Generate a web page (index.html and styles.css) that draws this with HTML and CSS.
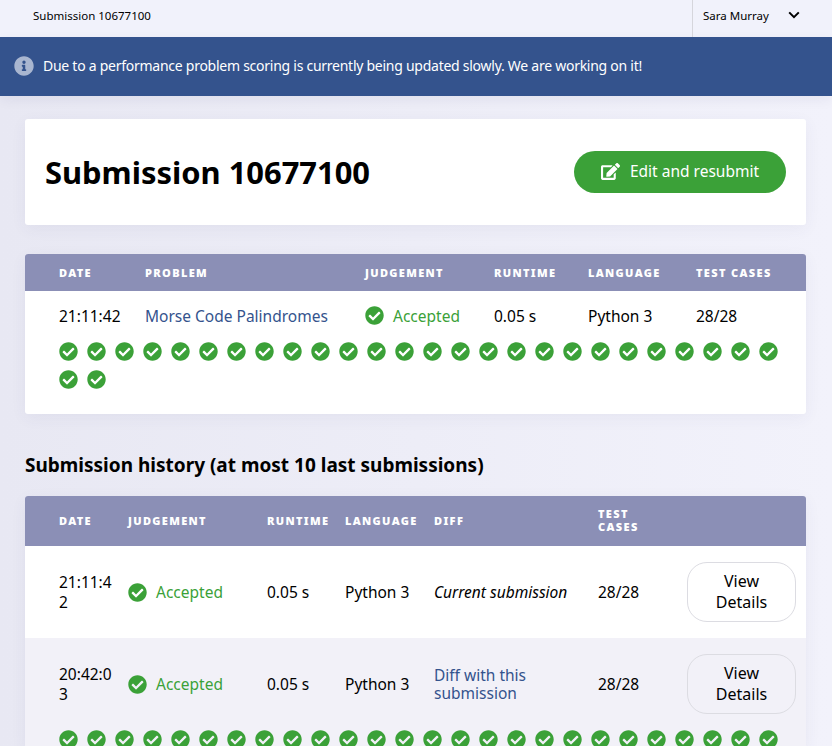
FILE: index.html
```html
<!DOCTYPE html>
<html lang="en">
  <head>
    <meta charset="UTF-8" />
    <title>Submission 10677100</title>
    <link rel="stylesheet" href="styles.css">
  </head>
  <body>
    <svg class="defs" width="0" height="0">
      <symbol id="ok" viewBox="0 0 512 512"><path d="M504 256c0 136.967-111.033 248-248 248S8 392.967 8 256 119.033 8 256 8s248 111.033 248 248zM227.314 387.314l184-184c6.248-6.248 6.248-16.379 0-22.627l-22.627-22.627c-6.248-6.249-16.379-6.249-22.628 0L216 308.118l-70.059-70.059c-6.248-6.248-16.379-6.248-22.628 0l-22.627 22.627c-6.248 6.248-6.248 16.379 0 22.627l104 104c6.249 6.249 16.379 6.249 22.628.001z"/></symbol>
    </svg>

    <header class="topbar">
      <span class="crumb">Submission 10677100</span>
      <div class="user">
        <span>Sara Murray</span>
        <svg class="chevron" viewBox="0 0 12 8"><path d="M1.2 1.4 6 6.2l4.800-4.800" /></svg>
      </div>
    </header>

    <div class="banner">
      <svg class="info" viewBox="0 0 512 512"><path d="M256 8C119.043 8 8 119.083 8 256c0 136.997 111.043 248 248 248s248-111.003 248-248C504 119.083 392.957 8 256 8zm0 110c23.196 0 42 18.804 42 42s-18.804 42-42 42-42-18.804-42-42 18.804-42 42-42zm56 254c0 6.627-5.373 12-12 12h-88c-6.627 0-12-5.373-12-12v-24c0-6.627 5.373-12 12-12h12v-64h-12c-6.627 0-12-5.373-12-12v-24c0-6.627 5.373-12 12-12h64c6.627 0 12 5.373 12 12v100h12c6.627 0 12 5.373 12 12v24z"/></svg>
      <span>Due to a performance problem scoring is currently being updated slowly. We are working on it!</span>
    </div>

    <main class="content">
      <section class="card title-card">
        <h1>Submission 10677100</h1>
        <a class="resubmit" href="#">
          <svg class="edit" viewBox="0 0 576 512"><path d="M402.6 83.2l90.2 90.2c3.8 3.8 3.8 10 0 13.8L274.4 405.6l-92.8 10.3c-12.4 1.4-22.9-9.1-21.5-21.5l10.3-92.8L388.8 83.2c3.8-3.8 10-3.8 13.8 0zm162-22.9l-48.8-48.8c-15.2-15.2-39.9-15.2-55.2 0l-35.4 35.4c-3.8 3.8-3.8 10 0 13.800l90.2 90.2c3.8 3.8 10 3.8 13.8 0l35.4-35.4c15.2-15.3 15.2-40 0-55.2zM384 346.2V448H64V128h229.8c3.2 0 6.2-1.3 8.5-3.5l40-40c7.6-7.6 2.2-20.5-8.5-20.5H48C21.5 64 0 85.5 0 112v352c0 26.5 21.500 48 48 48h352c26.5 0 48-21.5 48-48V306.2c0-10.7-12.9-16-20.5-8.5l-40 40c-2.2 2.3-3.5 5.3-3.5 8.500z"/></svg>
          Edit and resubmit
        </a>
      </section>

      <section class="card">
        <table class="current">
          <thead>
            <tr>
              <th class="c-date">Date</th>
              <th class="c-problem">Problem</th>
              <th class="c-judge">Judgement</th>
              <th class="c-runtime">Runtime</th>
              <th class="c-lang">Language</th>
              <th>Test cases</th>
            </tr>
          </thead>
          <tbody>
            <tr class="main-row">
              <td>21:11:42</td>
              <td><a href="#">Morse Code Palindromes</a></td>
              <td><span class="accepted"><svg class="ok"><use href="#ok" /></svg>Accepted</span></td>
              <td>0.05 s</td>
              <td>Python 3</td>
              <td>28/28</td>
            </tr>
            <tr>
              <td colspan="6" class="tests">
                <div class="test-list">
                  <svg class="ok"><use href="#ok" /></svg><svg class="ok"><use href="#ok" /></svg><svg class="ok"><use href="#ok" /></svg><svg class="ok"><use href="#ok" /></svg>
                  <svg class="ok"><use href="#ok" /></svg><svg class="ok"><use href="#ok" /></svg><svg class="ok"><use href="#ok" /></svg><svg class="ok"><use href="#ok" /></svg>
                  <svg class="ok"><use href="#ok" /></svg><svg class="ok"><use href="#ok" /></svg><svg class="ok"><use href="#ok" /></svg><svg class="ok"><use href="#ok" /></svg>
                  <svg class="ok"><use href="#ok" /></svg><svg class="ok"><use href="#ok" /></svg><svg class="ok"><use href="#ok" /></svg><svg class="ok"><use href="#ok" /></svg>
                  <svg class="ok"><use href="#ok" /></svg><svg class="ok"><use href="#ok" /></svg><svg class="ok"><use href="#ok" /></svg><svg class="ok"><use href="#ok" /></svg>
                  <svg class="ok"><use href="#ok" /></svg><svg class="ok"><use href="#ok" /></svg><svg class="ok"><use href="#ok" /></svg><svg class="ok"><use href="#ok" /></svg>
                  <svg class="ok"><use href="#ok" /></svg><svg class="ok"><use href="#ok" /></svg><svg class="ok"><use href="#ok" /></svg><svg class="ok"><use href="#ok" /></svg>
                </div>
              </td>
            </tr>
          </tbody>
        </table>
      </section>

      <h2>Submission history (at most 10 last submissions)</h2>

      <section class="card">
        <table class="history">
          <thead>
            <tr>
              <th class="h-date">Date</th>
              <th class="h-judge">Judgement</th>
              <th class="h-runtime">Runtime</th>
              <th class="h-lang">Language</th>
              <th class="h-diff">Diff</th>
              <th class="h-tests">Test cases</th>
              <th></th>
            </tr>
          </thead>
          <tbody>
            <tr class="hist-row">
              <td class="hist-date">21:11:42</td>
              <td><span class="accepted"><svg class="ok"><use href="#ok" /></svg>Accepted</span></td>
              <td>0.05 s</td>
              <td>Python 3</td>
              <td><em>Current submission</em></td>
              <td>28/28</td>
              <td><a class="details" href="#">View Details</a></td>
            </tr>
            <tr class="hist-row alt">
              <td class="hist-date">20:42:03</td>
              <td><span class="accepted"><svg class="ok"><use href="#ok" /></svg>Accepted</span></td>
              <td>0.05 s</td>
              <td>Python 3</td>
              <td><a href="#">Diff with this submission</a></td>
              <td>28/28</td>
              <td><a class="details" href="#">View Details</a></td>
            </tr>
            <tr class="alt">
              <td colspan="7" class="tests">
                <div class="test-list">
                  <svg class="ok"><use href="#ok" /></svg><svg class="ok"><use href="#ok" /></svg><svg class="ok"><use href="#ok" /></svg><svg class="ok"><use href="#ok" /></svg>
                  <svg class="ok"><use href="#ok" /></svg><svg class="ok"><use href="#ok" /></svg><svg class="ok"><use href="#ok" /></svg><svg class="ok"><use href="#ok" /></svg>
                  <svg class="ok"><use href="#ok" /></svg><svg class="ok"><use href="#ok" /></svg><svg class="ok"><use href="#ok" /></svg><svg class="ok"><use href="#ok" /></svg>
                  <svg class="ok"><use href="#ok" /></svg><svg class="ok"><use href="#ok" /></svg><svg class="ok"><use href="#ok" /></svg><svg class="ok"><use href="#ok" /></svg>
                  <svg class="ok"><use href="#ok" /></svg><svg class="ok"><use href="#ok" /></svg><svg class="ok"><use href="#ok" /></svg><svg class="ok"><use href="#ok" /></svg>
                  <svg class="ok"><use href="#ok" /></svg><svg class="ok"><use href="#ok" /></svg><svg class="ok"><use href="#ok" /></svg><svg class="ok"><use href="#ok" /></svg>
                  <svg class="ok"><use href="#ok" /></svg><svg class="ok"><use href="#ok" /></svg>
                </div>
              </td>
            </tr>
          </tbody>
        </table>
      </section>
    </main>
  </body>
</html>
```

FILE: styles.css
```css
html,
body {
  height: 746px;
  overflow: hidden;
}

body {
  margin: 0;
  font-family: "Noto Sans", sans-serif;
  color: #000;
  background: linear-gradient(90deg, #e8e8f3 0%, #f2f2fb 100%);
}

a {
  color: #34538d;
  text-decoration: none;
}

.defs {
  display: block;
  height: 0;
}

.topbar {
  display: flex;
  justify-content: space-between;
  height: 37px;
  padding-left: 33px;
  background-color: #f1f2fb;
  font-size: 11.5px;
  line-height: 32px;
}

.user {
  display: flex;
  justify-content: space-between;
  width: 140px;
  padding-left: 10px;
  padding-right: 32px;
  box-sizing: border-box;
  border-left: 1px solid #d6d6dc;
}

.chevron {
  width: 12px;
  height: 8px;
  margin-top: 11px;
  fill: none;
  stroke: #000;
  stroke-width: 2;
}

.banner {
  display: flex;
  align-items: center;
  gap: 9px;
  height: 59px;
  padding: 0 0 2px 14px;
  box-sizing: border-box;
  background-color: #34538d;
  color: #fff;
  font-size: 14px;
  letter-spacing: -0.26px;
  box-shadow: 0 4px 12px rgba(40, 40, 90, 0.06);
}

.info {
  width: 20px;
  height: 20px;
  fill: #a9b6d0;
}

.content {
  padding: 23px 26px 0 25px;
}

.card {
  margin-bottom: 29px;
  background-color: #fff;
  border-radius: 3px;
  box-shadow: 0 4px 16px rgba(60, 60, 120, 0.06);
  overflow: hidden;
}

.title-card {
  display: flex;
  align-items: center;
  justify-content: space-between;
  height: 106px;
  padding: 0 20px;
  box-sizing: border-box;
}

h1 {
  margin: 0;
  font-size: 30.9px;
  font-weight: 700;
}

.resubmit {
  display: flex;
  align-items: center;
  justify-content: center;
  gap: 10px;
  width: 212px;
  height: 42px;
  padding-bottom: 2px;
  box-sizing: border-box;
  border-radius: 21px;
  background-color: #3ba138;
  color: #fff;
  font-size: 15.5px;
}

.edit {
  width: 19px;
  height: 17px;
  fill: #fff;
}

table {
  width: 100%;
  border-collapse: collapse;
  table-layout: fixed;
  font-size: 15.5px;
}

th,
td {
  padding: 0 8px 0 0;
  box-sizing: border-box;
}

th {
  background-color: #8b8fb6;
  color: #fff;
  font-size: 11px;
  font-weight: 900;
  letter-spacing: 1.35px;
  line-height: 13px;
  text-align: left;
  text-transform: uppercase;
}

th:first-child,
td:first-child {
  padding-left: 34px;
}

.current thead tr {
  height: 37px;
}

.c-date {
  width: 120px;
}

.c-problem {
  width: 220px;
}

.c-judge {
  width: 129px;
}

.c-runtime {
  width: 94px;
}

.c-lang {
  width: 108px;
}

.main-row {
  height: 51px;
}

.main-row td {
  padding-bottom: 2px;
}

td.tests {
  padding-left: 34px;
  padding-right: 19px;
}

.test-list {
  display: flex;
  flex-wrap: wrap;
  gap: 9px;
}

.current .tests {
  padding-bottom: 25px;
}

.ok {
  display: block;
  flex: none;
  width: 19px;
  height: 19px;
  fill: #3ba138;
}

.accepted {
  display: flex;
  align-items: center;
  gap: 9px;
  color: #3ba138;
}

h2 {
  margin: 39px 0 19px;
  font-size: 19px;
  font-weight: 700;
  line-height: 24px;
}

.history thead tr {
  height: 50px;
}

.history th {
  padding-bottom: 2px;
}

.h-date {
  width: 103px;
}

.h-judge {
  width: 139px;
}

.h-runtime {
  width: 78px;
}

.h-lang {
  width: 89px;
}

.h-diff {
  width: 164px;
}

.history .h-tests {
  width: 89px;
  padding-right: 20px;
}

.hist-row {
  height: 92px;
}

.hist-row td {
  line-height: 18px;
}

.hist-row .hist-date {
  padding-right: 12px;
  line-height: 20px;
  word-break: break-all;
}

.alt {
  background-color: #f2f1f8;
}

.hist-row .details {
  display: block;
  width: 109px;
  padding: 8px 20px;
  box-sizing: border-box;
  border: 1px solid #dcdce2;
  border-radius: 20px;
  color: #000;
  font-size: 16px;
  line-height: 21px;
  text-align: center;
}
```
